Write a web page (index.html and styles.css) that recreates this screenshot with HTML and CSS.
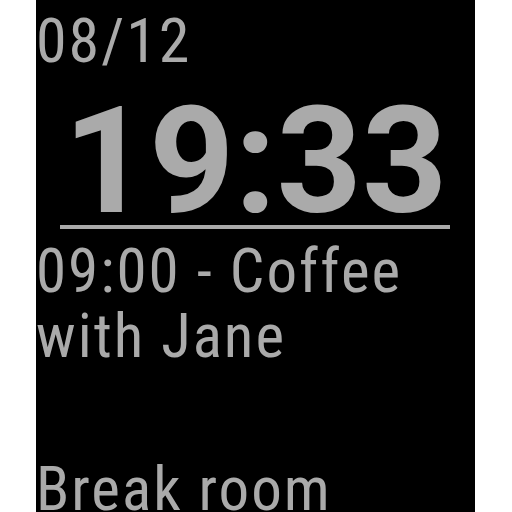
FILE: index.html
```html
<!DOCTYPE html>
<html><head><link rel="stylesheet" href="styles.css"></head>
<body>
<div class="watch">
  <div class="date">08/12</div>
  <div class="time">19:33</div>
  <div class="rule"></div>
  <div class="event">09:00 - Coffee with Jane</div>
  <div class="location">Break room</div>
</div>
</body></html>
```
FILE: styles.css
```css
html, body { margin: 0; padding: 0; background: #fff; }
.watch {
  width: 439px;
  height: 512px;
  margin-left: 36px;
  background: #000;
  color: #aaa;
  overflow: hidden;
  font-family: "Roboto", "Liberation Sans", sans-serif;
  font-stretch: 75%;
  letter-spacing: 2px;
  display: flex;
  flex-direction: column;
}
.watch > div { flex-shrink: 0; }
.date {
  font-size: 62px;
  line-height: 62px;
  margin-top: 10px;
  white-space: nowrap;
}
.time {
  font-size: 149px;
  font-weight: 700;
  font-stretch: 100%;
  letter-spacing: 0;
  line-height: 120px;
  margin-top: 29px;
  text-align: center;
  white-space: nowrap;
}
.rule {
  height: 4px;
  background: #aaa;
  margin: 4px 25px 0 24px;
}
.event {
  font-size: 61px;
  line-height: 65px;
  margin-top: 10px;
}
.location {
  font-size: 61px;
  line-height: 65px;
  margin-top: 88px;
  white-space: nowrap;
}
```
